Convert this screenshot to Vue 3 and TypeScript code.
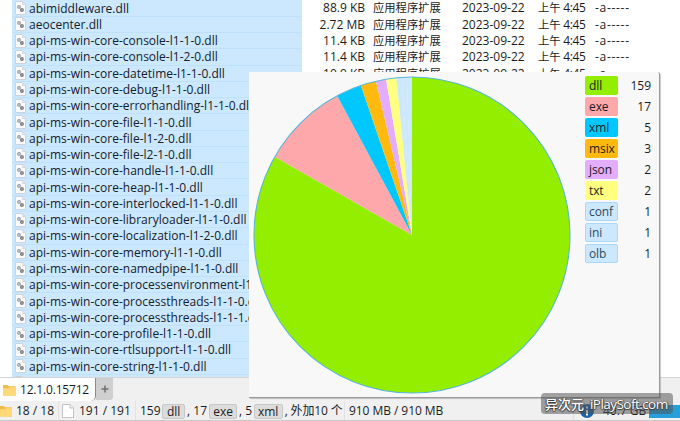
<script setup lang="ts">
interface FileRow {
  name: string
  size: string
}

interface TypeCount {
  ext: string
  count: number
  color: string
  minor?: boolean
}

const files: FileRow[] = [
  { name: 'abimiddleware.dll', size: '88.9 KB' },
  { name: 'aeocenter.dll', size: '2.72 MB' },
  { name: 'api-ms-win-core-console-l1-1-0.dll', size: '11.4 KB' },
  { name: 'api-ms-win-core-console-l1-2-0.dll', size: '11.4 KB' },
  { name: 'api-ms-win-core-datetime-l1-1-0.dll', size: '10.9 KB' },
  ...[
    'debug-l1-1-0',
    'errorhandling-l1-1-0',
    'file-l1-1-0',
    'file-l1-2-0',
    'file-l2-1-0',
    'handle-l1-1-0',
    'heap-l1-1-0',
    'interlocked-l1-1-0',
    'libraryloader-l1-1-0',
    'localization-l1-2-0',
    'memory-l1-1-0',
    'namedpipe-l1-1-0',
    'processenvironment-l1-1-0',
    'processthreads-l1-1-0',
    'processthreads-l1-1-1',
    'profile-l1-1-0',
    'rtlsupport-l1-1-0',
    'string-l1-1-0',
    'synch-l1-1-0',
  ].map((n) => ({ name: `api-ms-win-core-${n}.dll`, size: '' })),
]

const types: TypeCount[] = [
  { ext: 'dll', count: 159, color: '#94ee00' },
  { ext: 'exe', count: 17, color: '#ffa8ac' },
  { ext: 'xml', count: 5, color: '#00c8ff' },
  { ext: 'msix', count: 3, color: '#ffb90f' },
  { ext: 'json', count: 2, color: '#e4adfb' },
  { ext: 'txt', count: 2, color: '#ffff80' },
  { ext: 'conf', count: 1, color: '#cce8ff', minor: true },
  { ext: 'ini', count: 1, color: '#cce8ff', minor: true },
  { ext: 'olb', count: 1, color: '#cce8ff', minor: true },
]

const total = types.reduce((sum, t) => sum + t.count, 0)
const radius = 158

function point(count: number): string {
  const a = (count / total) * Math.PI * 2
  return `${(radius * Math.sin(a)).toFixed(2)} ${(-radius * Math.cos(a)).toFixed(2)}`
}

let passed = 0
const slices = types.map((t) => {
  const start = passed
  passed += t.count
  const large = t.count / total > 0.5 ? 1 : 0
  return {
    color: t.color,
    d: `M0 0L${point(start)}A${radius} ${radius} 0 ${large} 1 ${point(passed)}Z`,
  }
})
</script>

<template>
  <div class="window">
    <div class="list">
      <div v-for="f in files" :key="f.name" class="row">
        <div class="name">
          <svg class="file-icon" viewBox="0 0 11 14">
            <path d="M.5 .5H7.5L10.5 3.5V13.5H.5Z" fill="#fafafa" stroke="#cdd3d9" />
            <path d="M7.5 .5V3.5H10.5" fill="#e6e6e6" stroke="#c8cdd2" stroke-width=".6" />
            <circle cx="4" cy="5.9" r="1.4" fill="#ccc" stroke="#999da2" stroke-width="1.1" />
            <circle cx="6.9" cy="9.1" r="1.4" fill="#aaa" stroke="#7d8186" stroke-width="1.2" />
          </svg>
          <span>{{ f.name }}</span>
        </div>
        <template v-if="f.size">
          <span class="size">{{ f.size }}</span>
          <span class="kind">应用程序扩展</span>
          <span class="date">2023-09-22</span>
          <span class="time"><span class="half">上午</span> 4:45</span>
          <span class="attr">-a-----</span>
        </template>
      </div>
    </div>

    <div class="tabs">
      <div class="tab">
        <svg class="folder" viewBox="0 0 14 12">
          <path d="M0 1.5Q0 .5 1 .5H5L6.5 2H13Q14 2 14 3V11Q14 12 13 12H1Q0 12 0 11Z" fill="#f0bd48" />
          <path d="M0 4H5.5L7 3H14V11Q14 12 13 12H1Q0 12 0 11Z" fill="#ffd978" />
        </svg>
        <span>12.1.0.15712</span>
      </div>
      <div class="add">
        <svg viewBox="0 0 8 8"><path d="M4 .5V7.5M.5 4H7.5" stroke="#707070" stroke-width="1.5" /></svg>
      </div>
    </div>

    <div class="status">
      <div class="cell folders">
        <svg class="folder" viewBox="0 0 14 12">
          <path d="M0 1.5Q0 .5 1 .5H5L6.5 2H13Q14 2 14 3V11Q14 12 13 12H1Q0 12 0 11Z" fill="#f0bd48" />
          <path d="M0 4H5.5L7 3H14V11Q14 12 13 12H1Q0 12 0 11Z" fill="#ffd978" />
        </svg>
        <span>18 / 18</span>
      </div>
      <div class="cell docs">
        <svg class="doc" viewBox="0 0 12 14">
          <path d="M.5 .5H8L11.5 4V13.5H.5Z" fill="#fff" stroke="#c4c4c4" />
          <path d="M8 .5V4H11.5" fill="#eee" stroke="#c4c4c4" />
        </svg>
        <span>191 / 191</span>
      </div>
      <div class="cell kinds">
        <span>159</span><span class="key k1">dll</span><span>, 17</span><span class="key k2">exe</span><span>, 5</span><span class="key k3">xml</span><span class="more">, 外加10 个</span>
      </div>
      <div class="cell bytes"><span>910 MB / 910 MB</span></div>
      <div class="cell free">
        <svg class="info" viewBox="0 0 14 14">
          <circle cx="7" cy="7" r="7" fill="#1b62ac" />
          <path d="M7 2.6V4.6M7 6V11.4" stroke="#fff" stroke-width="2" />
        </svg>
        <span>40.7 GB</span>
        <i class="meter"></i>
      </div>
    </div>

    <div class="popup">
      <svg class="pie" viewBox="-159 -159 318 318">
        <path v-for="(s, i) in slices" :key="i" :d="s.d" :fill="s.color" />
        <circle r="158" fill="none" stroke="#58b7d8" stroke-width="1.1" />
      </svg>
      <div class="legend">
        <div v-for="t in types" :key="t.ext" class="entry">
          <span class="chip" :class="{ minor: t.minor }" :style="{ backgroundColor: t.color }">{{ t.ext }}</span>
          <span class="count">{{ t.count }}</span>
        </div>
      </div>
    </div>

    <div class="watermark"><span class="cn">异次元</span><span class="en">iPlaySoft.com</span></div>
  </div>
</template>

<style>
body {
  margin: 0;
  overflow: hidden;
}
</style>

<style scoped>
.window {
  position: relative;
  width: 680px;
  height: 421px;
  overflow: hidden;
  background: #fff;
  color: #1c1c1c;
  font: 12px/16px 'Open Sans', 'Noto Sans CJK SC', sans-serif;
  white-space: pre;
}
.list {
  height: 377px;
  box-sizing: border-box;
  padding-top: 0.4px;
  overflow: hidden;
  background: linear-gradient(90deg, #fff 12px, #cce8ff 12px, #cce8ff 302px, #fff 302px);
}
.row {
  display: grid;
  grid-template-columns: 290px 63px 89px 76px 57px 1fr;
  padding-left: 12px;
  height: 16.29px;
  line-height: 16px;
}
.name {
  display: flex;
  align-items: center;
  gap: 3px;
  padding-left: 3px;
  border-bottom: 1px solid #bfe1fb;
  box-sizing: border-box;
  height: 16.29px;
  line-height: 17px;
  color: #14202c;
  letter-spacing: 0.01px;
}
.file-icon {
  width: 11px;
  height: 14px;
  flex: none;
}
.size {
  text-align: right;
}
.kind {
  padding-left: 8px;
  font-size: 11.3px;
}
.date {
  padding-left: 8px;
}
.time {
  padding-left: 8px;
  letter-spacing: -0.4px;
}
.half {
  font-size: 11.3px;
  letter-spacing: 0;
}
.attr {
  padding-left: 8px;
  letter-spacing: 0.7px;
}
.tabs {
  display: flex;
  height: 24px;
  box-sizing: border-box;
  background: #f0f0f0;
  border-top: 1px solid #d4d4d4;
}
.tab {
  display: flex;
  align-items: center;
  gap: 4px;
  width: 96px;
  height: 23px;
  padding-left: 3px;
  box-sizing: border-box;
  background: #fff;
  border-right: 1px solid #8c8c8c;
  border-radius: 0 0 5px 0;
  letter-spacing: -0.18px;
}
.folder {
  width: 13px;
  height: 12px;
  flex: none;
}
.add {
  display: grid;
  place-items: center;
  width: 17px;
  height: 22px;
  background: #cfcfcf;
  border-radius: 0 0 3px 0;
}
.add svg {
  width: 8px;
  height: 8px;
}
.status {
  display: flex;
  align-items: center;
  height: 19px;
  background: #f0f0f0;
  border-bottom: 1px solid #c9c9c9;
  box-shadow: 0 1px 0 #e8e8e8;
}
.cell {
  display: flex;
  align-items: center;
  height: 19px;
  padding-top: 1px;
  box-sizing: border-box;
}
.cell + .cell {
  border-left: 1px solid #e2e2e2;
}
.folders {
  width: 58px;
  gap: 4px;
}
.folders .folder {
  margin-left: -1px;
}
.docs {
  width: 77px;
  gap: 5px;
  padding-left: 3px;
}
.doc {
  width: 12px;
  height: 14px;
}
.kinds {
  width: 209px;
  padding-left: 4px;
}
.key {
  box-sizing: border-box;
  height: 15px;
  line-height: 13px;
  text-align: center;
  background: #dcdcdc;
  border: 1px solid #c8c8c8;
  border-radius: 2px;
}
.k1 {
  width: 23px;
  margin: 0 2px 0 1.5px;
}
.k2 {
  width: 28px;
  margin: 0 2px 0 2px;
}
.k3 {
  width: 29px;
  margin: 0 2px 0 1.5px;
}
.more {
  letter-spacing: -0.15px;
}
.bytes {
  width: 229px;
  padding-left: 4px;
  letter-spacing: -0.06px;
}
.free {
  flex: 1;
  padding-left: 6px;
  gap: 9px;
}
.info {
  width: 14px;
  height: 14px;
  flex: none;
}
.free span {
  width: 46px;
}
.meter {
  flex: 1;
  height: 13px;
  margin-left: -9px;
  background: #26a0da;
}
.popup {
  position: absolute;
  left: 249px;
  top: 72px;
  width: 411px;
  height: 326px;
  box-sizing: border-box;
  display: flex;
  padding: 4.4px 0 0 4px;
  background: #f8f8f8;
  border-right: 1px solid #999;
  border-bottom: 1px solid #999;
  border-radius: 0 2px 0 0;
  box-shadow: 1px 1px 1px rgba(0, 0, 0, 0.2);
}
.pie {
  width: 318px;
  height: 318px;
  flex: none;
}
.legend {
  display: flex;
  flex-direction: column;
  gap: 1.9px;
  width: 66px;
  margin-left: 14px;
}
.entry {
  display: flex;
  justify-content: space-between;
  height: 19px;
  line-height: 19px;
}
.chip {
  box-sizing: border-box;
  width: 33px;
  height: 19px;
  padding-left: 3px;
  line-height: 17px;
  letter-spacing: -0.1px;
  border: 1px solid transparent;
  border-radius: 2px;
}
.chip.minor {
  color: #2c4a66;
  border-color: #a9d8fa;
}
.watermark {
  position: absolute;
  left: 541px;
  top: 393px;
  width: 132px;
  height: 21px;
  box-sizing: border-box;
  display: flex;
  align-items: center;
  gap: 6px;
  padding-left: 4px;
  background: rgba(80, 80, 80, 0.52);
  border-radius: 4px;
  color: #fff;
  text-shadow: 0 1px 1px #333, 1px 0 1px #444, -1px 0 1px #555;
}
.cn {
  font-size: 13px;
  font-weight: 500;
}
.en {
  font-size: 13.5px;
  letter-spacing: -0.55px;
  font-weight: 500;
}
</style>
